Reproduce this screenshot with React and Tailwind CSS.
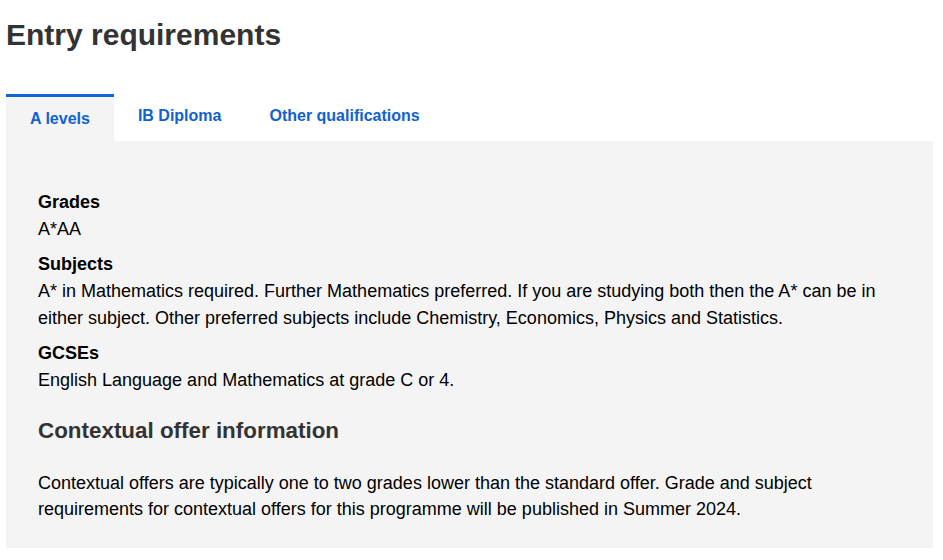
import React, { useState } from 'react';

const TABS = ['A levels', 'IB Diploma', 'Other qualifications'];

const Requirement = ({ label, children, first }) => (
  <div className={first ? '' : 'mt-2'}>
    <dt className="font-bold text-black leading-[27px]">{label}</dt>
    <dd className="text-black leading-[27px]">{children}</dd>
  </div>
);

export default function App() {
  const [active, setActive] = useState(0);

  return (
    <div className="bg-white min-h-[560px] px-[6px] pt-[17px] font-['Liberation_Sans',Arial,sans-serif]">
      <h1 className="text-[30px] leading-[36px] font-bold text-[#333]">Entry requirements</h1>

      {/* タブ */}
      <div className="flex mt-[41px] text-[16px]">
        {TABS.map((tab, i) =>
          i === active ? (
            <button
              key={tab}
              onClick={() => setActive(i)}
              className="px-6 pt-[10px] pb-[10px] border-t-[3px] border-[#0f66d6] bg-[#f4f4f4] font-bold text-[#1061d1] leading-6"
            >
              {tab}
            </button>
          ) : (
            <button
              key={tab}
              onClick={() => setActive(i)}
              className="px-6 pt-[10px] pb-[13px] font-bold text-[#1061d1] leading-6"
            >
              {tab}
            </button>
          )
        )}
      </div>

      {/* パネル */}
      <div className="w-[927px] bg-[#f4f4f4] px-8 pt-[48px] pb-[26px] text-[18px]">
        <dl>
          <Requirement label="Grades" first>A*AA</Requirement>
          <Requirement label="Subjects">
            A* in Mathematics required. Further Mathematics preferred. If you are studying both then the A* can be in either subject. Other preferred subjects include Chemistry, Economics, Physics and Statistics.
          </Requirement>
          <Requirement label="GCSEs">English Language and Mathematics at grade C or 4.</Requirement>
        </dl>

        <h2 className="mt-[22px] text-[22.4px] leading-[30px] font-bold text-[#333]">Contextual offer information</h2>
        <p className="mt-6 text-black leading-[26px]">
          Contextual offers are typically one to two grades lower than the standard offer. Grade and subject requirements for contextual offers for this programme will be published in Summer 2024.
        </p>
      </div>
    </div>
  );
}
